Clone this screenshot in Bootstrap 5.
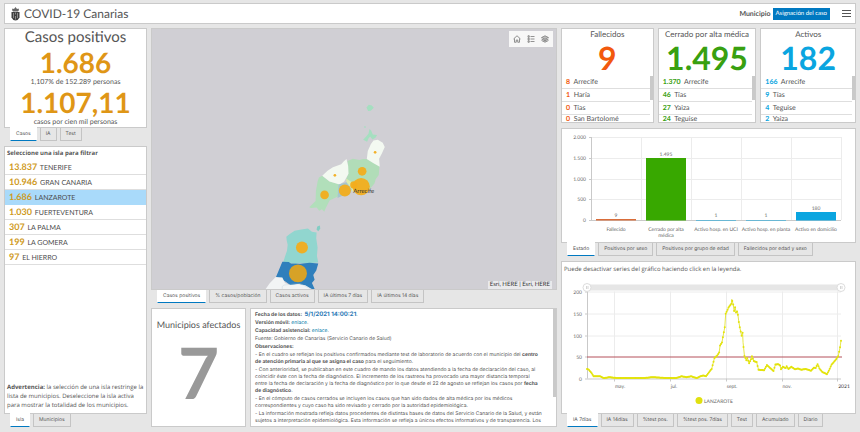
<!DOCTYPE html>
<html lang="es">
<head>
<meta charset="utf-8">
<meta name="viewport" content="width=device-width, initial-scale=1">
<title>COVID-19 Canarias</title>
<link href="https://cdn.jsdelivr.net/npm/bootstrap@5.3.0/dist/css/bootstrap.min.css" rel="stylesheet">
<style>
  body { background: #e6e6e6; color: #555; font-family: Lato, "Liberation Sans", sans-serif; font-size: 7px; line-height: 8px; text-rendering: geometricPrecision; }
  button { text-rendering: geometricPrecision; }
  .dash { height: 100vh; padding: 3px 4px 5px; gap: 4px; }
  .panel { background: #fff; border: 1px solid #cacaca; min-height: 0; min-width: 0; overflow: hidden; }
  .topbar { height: 21px; padding: 0 4px 0 6px; }
  .topbar h1 { font-size: 12px; line-height: 16px; }
  .topbar b { margin-right: 2px; }
  .crest { width: 9px; height: 14px; }
  .btn-assign { background: #0079c1; color: #fff; font-size: 6px; line-height: 12px; padding: 0 3px; border: 0; border-radius: 0; }
  .btn-plain { background: none; border: 0; padding: 0; line-height: 0; color: #4c4c4c; }
  .board { display: grid; grid-template-columns: 143fr 406fr 295fr; gap: 4px; }
  .board > * { min-width: 0; min-height: 0; }
  .stack { gap: 5px; }
  .tabset { min-height: 0; min-width: 0; }
  .pair { gap: 4px; }
  .tabs { height: 13px; padding-left: 6px; gap: 3px; }
  .tabs button { background: #e6e6e6; border: 1px solid #c4c4c4; border-top: 0; color: #595959; font-family: Inter, sans-serif; font-size: 5px; line-height: 10px; padding: 0 5px 1px; white-space: nowrap; }
  .tabs button.on { background: #fff; border-color: #fff; border-bottom: 1px solid #0079c1; margin-top: -1px; padding-top: 1px; }
  .g113 { flex: 113 1 0; } .g119 { flex: 119 1 0; } .g128 { flex: 128 1 0; }
  .g95 { flex: 95 1 0; } .g166 { flex: 166 1 0; } .g275 { flex: 275 1 0; } .g281 { flex: 281 1 0; }
  .t-orange { color: #df9616; } .t-gold { color: #cf9a1c; }
  .t-red { color: #f2590d; } .t-green { color: #38a010; } .t-blue { color: #0aa5e0; }
  .kpi h2 { font-size: 15px; line-height: 17px; }
  .kpi .fig { font-size: 28px; line-height: 33px; font-weight: 700; }
  .kpi .sub { font-size: 7px; line-height: 7px; }
  .isles button { background: none; border: 0; border-bottom: 1px solid #dedede; font-size: 7px; line-height: 14px; height: 15px; padding: 0 4px; color: #4c4c4c; text-align: left; }
  .isles button.sel { background: #a9dafa; border-color: #a9dafa; }
  .isles b { font-size: 9px; margin-right: 1px; }
  .hint { font-family: "Open Sans", sans-serif; line-height: 9px; font-size: 6px; padding: 2px; }
  .cap { padding: 3px 2px; }
  .warn { white-space: nowrap; padding-bottom: 3px; }
  .mini h2 { font-size: 8px; line-height: 11px; white-space: nowrap; }
  .mini .fig { font-size: 32px; line-height: 36px; font-weight: 700; }
  .mini ul { font-size: 7px; line-height: 12px; }
  .mini li { border-bottom: 1px solid #dedede; height: 13px; padding-left: 4px; }
  .mini li:last-child { border-bottom: 0; height: 8px; line-height: 8px; }
  .w92 { flex: 92 1 0; } .w98 { flex: 98 1 0; } .w95 { flex: 95 1 0; }
  .thumb { width: 3px; background: #c9c9c9; }
  .map { background: #d0cfd4; position: relative; }
  .tools { position: absolute; top: 2px; right: 3px; background: #f7f7f7; height: 16px; padding: 0 4px; gap: 6px; }
  .credit { position: absolute; right: 4px; bottom: 0; background: #e9e9ec; color: #333; font-size: 6px; padding: 0 2px; }
  .affected { flex: 94 1 0; padding-top: 10px; }
  .notes { flex: 308 1 0; }
  .affected h2 { font-size: 9px; line-height: 12px; }
  .affected .fig { font-size: 71px; line-height: 84px; font-weight: 700; color: #999; }
  .notes .txt { font-family: Inter, sans-serif; font-size: 5px; line-height: 7px; padding: 3px 3px 0 4px; white-space: nowrap; min-width: 0; }
  .notes p { margin-bottom: 1px; }
  .notes a { color: #0079a8; text-decoration: none; }
  .notes .stamp { color: #2a78b5; font-size: 6px; line-height: 6px; }
  svg text { font-family: Lato, "Liberation Sans", sans-serif; fill: #666; }
  svg .ink { fill: #333; }
</style>
<script src="https://cdn.jsdelivr.net/npm/bootstrap@5.3.0/dist/js/bootstrap.bundle.min.js"></script>
</head>
<body>
<div class="dash d-flex flex-column">
  <header class="panel topbar d-flex align-items-center flex-shrink-0">
    <svg class="crest" viewBox="0 0 18 28" aria-hidden="true"><path d="M2 6l1-3 3 1 3-4 3 4 3-1 1 3-2 3H4z" fill="#666"/><path d="M1 10h16v11q-2 5-8 6-6-1-8-6z" fill="#3f3f3f"/><path d="M5 12v10M9 11v4M9 18v7M13 12v10" stroke="#aaa" stroke-width="1.4"/></svg>
    <h1 class="mb-0 ms-1 fw-normal">COVID-19 Canarias</h1>
    <b class="ms-auto">Municipio</b>
    <button class="btn-assign" type="button">Asignación del caso</button>
    <button class="btn-plain ms-2 ps-1" type="button" aria-label="Menú"><svg width="9" height="9" viewBox="0 0 9 9" stroke="#555"><path d="M0 1.500h9M0 4.500h9M0 7.500h9"/></svg></button>
  </header>

  <main class="board flex-grow-1">
    <div class="stack d-flex flex-column">
      <section class="tabset d-flex flex-column g113">
        <div class="panel kpi flex-grow-1 text-center">
          <h2 class="mb-0 fw-normal">Casos positivos</h2>
          <div class="fig t-orange">1.686</div>
          <div class="sub">1,107% de 152.289 personas</div>
          <div class="fig t-orange">1.107,11</div>
          <div class="sub">casos por cien mil personas</div>
        </div>
        <div class="tabs d-flex"><button class="on" type="button">Casos</button><button type="button">IA</button><button type="button">Test</button></div>
      </section>
      <section class="tabset d-flex flex-column g281">
        <div class="panel flex-grow-1 d-flex flex-column">
          <b class="hint">Seleccione una isla para filtrar</b>
          <div class="isles d-flex flex-column">
            <button type="button"><b class="t-gold">13.837</b> TENERIFE</button>
            <button type="button"><b class="t-gold">10.946</b> GRAN CANARIA</button>
            <button type="button" class="sel"><b class="t-gold">1.686</b> LANZAROTE</button>
            <button type="button"><b class="t-gold">1.030</b> FUERTEVENTURA</button>
            <button type="button"><b class="t-gold">307</b> LA PALMA</button>
            <button type="button"><b class="t-gold">199</b> LA GOMERA</button>
            <button type="button"><b class="t-gold">97</b> EL HIERRO</button>
          </div>
          <p class="hint warn mt-auto mb-0"><b>Advertencia:</b> la selección de una isla restringe la<br>lista de municipios. Deseleccione la isla activa<br>para mostrar la totalidad de los municipios.</p>
        </div>
        <div class="tabs d-flex"><button class="on" type="button">Isla</button><button type="button">Municipios</button></div>
      </section>
    </div>

    <div class="stack d-flex flex-column">
      <section class="tabset d-flex flex-column g275">
        <div class="panel map flex-grow-1">
          <svg class="d-block w-100 h-100" viewBox="0 0 405 261" preserveAspectRatio="xMidYMax slice" role="img" aria-label="Mapa de casos por municipio">
            <g transform="translate(98 66) scale(.33333)" stroke-linejoin="round">
              <g fill="#a5dfc0"><path d="M351 39l7-8 9 2 6 7-9 9-8 1zM345 95l4 1-1 5-4-2zM341 136l9-10 7-8 3-14 5 4 5 12 13 2-5 8-9 5-7-9-5 6-4 10z"/></g>
              <path d="M352 194l38 22-2 26-9 12-4 14-14 16-21 8-30-2-10-20-10-15 6-17-2-38 16-7 20 4 10-3z" fill="#b1ddb8"/>
              <path d="M218 244l22 18 30 8-3 20-2 17-25 12-12 24-4 10-7-8-8 5-8-10-17 1-5-2 19-19 1-30 5-28 4-12z" fill="#b1dfba"/>
              <path d="M372 138l13-2 15 9 6 13-8 18-9 17 2 24-20-11-19-12 3-24 9-20z" fill="#f3f9f1"/>
              <path d="M218 244l16-15 16-10 25-9 8-9 8-7 5 21 1 23-13 24-14 9-30-9z" fill="#f3f9f1"/>
              <path d="M290 253l16 10 10 24 25 2-14 10-20-9-16-24z" fill="#dcecaf"/>
              <path d="M267 271l24-7 16 21-7 16-23 4-13 6z" fill="#a6c6ce"/>
              <path d="M203 397l8-3 1 10-6 7-5-5z" fill="#83cdc4"/>
              <path d="M110 428l9-8 16-10 20-4 20-3 12 10 14 2-1 18 4 27-2 26 4 19-37 3-19-1-13 3-20-4-17 1 6-20 6-17 2-18-3-14z" fill="#91d6cf"/>
              <path d="M98 503l19 1 7 4 28 1 28-3 26 2-6 21-9 14 4 14-8 10 10 22-32-8-16-12-24 6-20-14-27-10z" fill="#2f7fbc"/>
              <path d="M47 586l13-18 18-19 20 1 8 17 15 6 24-3 22 4 21 12z" fill="#f2f4f5"/>
              <path d="M98 586q-3-11 5-13l31-3 18-1 14 7 22 11" fill="none" stroke="#b6c9d5"/>
              <g fill="#f2ad1c" fill-opacity=".95"><circle cx="377" cy="174" r="4"/><circle cx="256" cy="243" r="4"/><circle cx="338" cy="231" r="13"/><circle cx="225" cy="302" r="13"/><circle cx="286" cy="289" r="18"/><circle cx="313" cy="272" r="11"/><circle cx="335" cy="277" r="26"/><circle cx="157" cy="460" r="18"/></g>
              <circle cx="145" cy="538" r="27" fill="#d7a227"/>
              <text x="311" y="295" font-size="18" class="ink">Arrecife</text>
            </g>
          </svg>
          <div class="tools d-flex align-items-center">
            <button class="btn-plain" type="button" aria-label="Inicio"><svg width="8" height="8" viewBox="0 0 16 16" fill="none" stroke="#777" stroke-width="1.600"><path d="M1 8l7-6.500L15 8M3 7v7.500h3.500V10h3v4.500H13V7"/></svg></button>
            <button class="btn-plain" type="button" aria-label="Leyenda"><svg width="8" height="8" viewBox="0 0 16 16" fill="none" stroke="#777" stroke-width="1.600"><path d="M7 3h8M7 8h8M7 13h8M2 1.500h2.500v3H2zM2 6.500h2.500v3H2zM2 11.500h2.500v3H2z"/></svg></button>
            <button class="btn-plain" type="button" aria-label="Capas"><svg width="8" height="8" viewBox="0 0 16 16" fill="none" stroke="#777" stroke-width="1.400"><path d="M8 1.500l7 3.500-7 3.500L1 5zM1 8l7 3.500L15 8M1 11l7 3.500 7-3.500" fill="#bbb"/></svg></button>
          </div>
          <div class="credit">Esri, HERE | Esri, HERE</div>
        </div>
        <div class="tabs d-flex"><button class="on" type="button">Casos positivos</button><button type="button">% casos/población</button><button type="button">Casos activos</button><button type="button">IA últimos 7 días</button><button type="button">IA últimos 14 días</button></div>
      </section>
      <section class="d-flex g119 tabset pair">
        <div class="panel affected text-center">
          <h2 class="mb-0 fw-normal">Municipios afectados</h2>
          <div class="fig">7</div>
        </div>
        <div class="panel notes d-flex">
          <div class="txt flex-grow-1">
            <p><b>Fecha de los datos: &nbsp;<span class="stamp">5/1/2021 14:00:21</span></b>.</p>
            <p><b>Versión móvil:</b> <a href="#">enlace</a>.</p>
            <p><b>Capacidad asistencial:</b> <a href="#">enlace</a>.</p>
            <p>Fuente: Gobierno de Canarias (Servicio Canario de Salud)</p>
            <p><b>Observaciones:</b></p>
            <p>- En el cuadro se reflejan los positivos confirmados mediante test de laboratorio de acuerdo con el municipio del <b>centro<br>de atención primaria al que se asigna el caso</b> para el seguimiento.</p>
            <p>- Con anterioridad, se publicaban en este cuadro de mando los datos atendiendo a la fecha de declaración del caso, al<br>coincidir éste con la fecha de diagnóstico. El incremento de los rastreos ha provocado una mayor distancia temporal<br>entre la fecha de declaración y la fecha de diagnóstico por lo que desde el 22 de agosto se reflejan los casos por <b>fecha<br>de diagnóstico</b>.</p>
            <p>- En el cómputo de casos cerrados se incluyen los casos que han sido dados de alta médica por los médicos<br>correspondientes y cuyo caso ha sido revisado y cerrado por la autoridad epidemiológica.</p>
            <p>- La información mostrada refleja datos procedentes de distintas bases de datos del Servicio Canario de la Salud, y están<br>sujetos a interpretación epidemiológica. Esta información se refleja a únicos efectos informativos y de transparencia. Los</p>
          </div>
          <div class="thumb h-75 flex-shrink-0"></div>
        </div>
      </section>
    </div>

    <div class="stack d-flex flex-column">
      <section class="d-flex g95 tabset pair">
        <div class="panel mini d-flex flex-column w92 text-center">
          <h2 class="mb-0 fw-normal">Fallecidos</h2><div class="fig t-red">9</div>
          <div class="d-flex text-start flex-grow-1"><ul class="list-unstyled mb-0 flex-grow-1"><li><b class="t-red">8</b>&nbsp; Arrecife</li><li><b class="t-red">1</b>&nbsp; Haría</li><li><b class="t-red">0</b>&nbsp; Tías</li><li><b class="t-red">0</b>&nbsp; San Bartolomé</li></ul><div class="thumb h-50"></div></div>
        </div>
        <div class="panel mini d-flex flex-column w98 text-center">
          <h2 class="mb-0 fw-normal">Cerrado por alta médica</h2><div class="fig t-green">1.495</div>
          <div class="d-flex text-start flex-grow-1"><ul class="list-unstyled mb-0 flex-grow-1"><li><b class="t-green">1.370</b>&nbsp; Arrecife</li><li><b class="t-green">46</b>&nbsp; Tías</li><li><b class="t-green">27</b>&nbsp; Yaiza</li><li><b class="t-green">24</b>&nbsp; Teguise</li></ul><div class="thumb h-50"></div></div>
        </div>
        <div class="panel mini d-flex flex-column w95 text-center">
          <h2 class="mb-0 fw-normal">Activos</h2><div class="fig t-blue">182</div>
          <div class="d-flex text-start flex-grow-1"><ul class="list-unstyled mb-0 flex-grow-1"><li><b class="t-blue">166</b>&nbsp; Arrecife</li><li><b class="t-blue">9</b>&nbsp; Tías</li><li><b class="t-blue">4</b>&nbsp; Teguise</li><li><b class="t-blue">2</b>&nbsp; Yaiza</li></ul><div class="thumb h-50"></div></div>
        </div>
      </section>
      <section class="tabset d-flex flex-column g128">
        <div class="panel flex-grow-1">
          <svg class="d-block w-100 h-100" viewBox="0 0 293 113" role="img" aria-label="Casos por estado">
            <path d="M29 8.500h250M29 29.500h250M29 50.500h250M29 70.500h250M79.500 8v83M129.500 8v83M179.500 8v83M229.500 8v83M279.500 8v83" stroke="#ececec" fill="none"/>
            <path d="M29.500 8v83M27 8.500h2M27 29.500h2M27 50.500h2M27 70.500h2M27 91.500h252" stroke="#c9c9c9" fill="none"/>
            <path d="M34 90h40v1.500H34z" fill="#d96d3a"/><path d="M84 29h40v62.500H84z" fill="#38a800"/><path d="M134 91h40v.5h-40zM184 91h40v.5h-40z" fill="#0aa5e0"/><path d="M234 83h40v8.500h-40z" fill="#0aa5e0"/>
            <g font-size="5" text-anchor="end"><text x="24" y="10">2.000</text><text x="24" y="31">1.500</text><text x="24" y="52">1.000</text><text x="24" y="72">500</text><text x="24" y="93">0</text></g>
            <g font-size="5" text-anchor="middle"><text x="54" y="88">9</text><text x="104" y="27">1.495</text><text x="154" y="88">1</text><text x="204" y="88">1</text><text x="254" y="81">180</text>
            <text x="54" y="102">Fallecido</text><text x="104" y="102">Cerrado por alta</text><text x="104" y="108">médica</text><text x="154" y="102">Activo hosp. en UCI</text><text x="204" y="102">Activo hosp. en planta</text><text x="254" y="102">Activo en domicilio</text></g>
          </svg>
        </div>
        <div class="tabs d-flex"><button class="on" type="button">Estado</button><button type="button">Positivos por sexo</button><button type="button">Positivos por grupo de edad</button><button type="button">Fallecidos por edad y sexo</button></div>
      </section>
      <section class="tabset d-flex flex-column g166">
        <div class="panel flex-grow-1 d-flex flex-column">
          <p class="mb-0 hint cap">Puede desactivar series del gráfico haciendo click en la leyenda.</p>
          <svg class="d-block w-100 flex-grow-1" viewBox="0 0 293 135" height="135" role="img" aria-label="Incidencia acumulada a 7 días, Lanzarote">
            <path d="M25 7h254v6H25z" fill="#e6e6e6"/>
            <path d="M25 14.500h254M25 36.500h254M25 58.500h254M52.500 14v87M108.500 14v87M164.500 14v87M220.500 14v87M275.500 14v87" stroke="#ececec" fill="none"/>
            <path d="M25.500 14v87M23 14.500h2M23 36.500h2M23 58.500h2M23 79.500h2M23 101.500h256M52.500 101v3M108.500 101v3M164.500 101v3M220.500 101v3M275.500 101v3" stroke="#c9c9c9" fill="none"/>
            <path d="M25 79.500h255" stroke="#b5505a"/>
            <g fill="#fff" stroke="#ddd"><circle cx="25" cy="10" r="4"/><circle cx="279" cy="10" r="4"/></g>
            <path d="M24.500 8.500v3M26 8.500v3M278.500 8.500v3M280 8.500v3" stroke="#bbb" stroke-width=".6"/>
            <g id="series" fill="#e3e30a"></g>
            <g font-size="5" text-anchor="end"><text x="20" y="16">200</text><text x="20" y="38">150</text><text x="20" y="60">100</text><text x="20" y="81">50</text><text x="20" y="103">0</text></g>
            <g font-size="5" text-anchor="middle"><text x="58" y="110">may.</text><text x="112" y="110">jul.</text><text x="170" y="110">sept.</text><text x="225" y="110">nov.</text><text x="282" y="110" class="ink">2021</text></g>
            <circle cx="137" cy="123" r="3.500" fill="#e0e010"/><text x="142" y="125" font-size="5">LANZAROTE</text>
          </svg>
        </div>
        <div class="tabs d-flex"><button class="on" type="button">IA 7días</button><button type="button">IA 14días</button><button type="button">%test pos.</button><button type="button">%test pos. 7días</button><button type="button">Test</button><button type="button">Acumulado</button><button type="button">Diario</button></div>
      </section>
    </div>
  </main>
</div>
<script>
  // Key days of the series: [day offset, cases per 100k]
  const keys = [[0,22],[2,20],[5,12],[7,5],[14,5],[18,1],[24,3],[32,1],[60,1],[70,3],[85,1],[95,1],[101,5],[106,3],[111,5],[117,1],[121,5],[124,7],[127,5],[130,14],[133,22],[136,47],[139,53],[141,60],[142,76],[144,83],[145,95],[147,118],[148,149],[151,163],[154,172],[154.500,182],[156,170],[157,155],[158,164],[159,152],[160.500,155],[162,130],[163,118],[165,98],[166,105],[166.500,83],[168,52],[170,42],[171,47],[173,35],[175,44],[176,51],[178,40],[181,38],[183,20],[189,19],[192,31],[195,25],[199,17],[201,32],[204,33],[206,30],[207,21],[209,27],[212,24],[213,28],[215,22],[218,27],[222,21],[225,23],[229,20],[233,22],[239,18],[242,25],[244,24],[246,33],[248,23],[251,15],[256,10],[258,18],[261,32],[265,42],[268,51],[270,72],[271,87]];
  const px = d => 25 + d * 254 / 271, py = v => 101 - v * 0.435;
  const ns = "http://www.w3.org/2000/svg", g = document.getElementById("series");
  const line = document.createElementNS(ns, "polyline");
  line.setAttribute("points", keys.map(k => px(k[0]) + "," + py(k[1])).join(" "));
  line.setAttribute("fill", "none");
  line.setAttribute("stroke", "#e6e64a");
  g.append(line);
  for (let i = 1, d = 0; d <= 271; d++) {
    while (keys[i][0] < d) i++;
    const [a, b] = [keys[i - 1], keys[i]];
    const v = a[1] + (b[1] - a[1]) * (d - a[0]) / (b[0] - a[0]);
    const c = document.createElementNS(ns, "circle");
    c.setAttribute("cx", px(d)); c.setAttribute("cy", py(v)); c.setAttribute("r", 1);
    g.append(c);
  }
</script>
</body>
</html>
